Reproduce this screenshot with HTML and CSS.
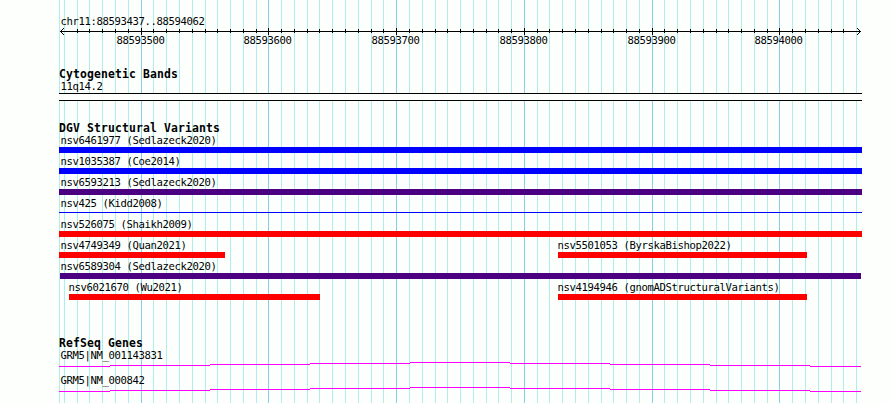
FILE: index.html
```html
<!DOCTYPE html>
<html lang="en">
<head>
    <meta charset="UTF-8">
    <title>chr11:88593437..88594062</title>
    <link rel="stylesheet" href="styles.css">
</head>
<body>

<div class="browser">
    <!-- Vertical guide lines behind all the tracks -->
    <svg class="guides" width="890" height="403" shape-rendering="crispEdges">
        <path class="minor" id="minorGuides" />
        <path class="major" id="majorGuides" />
    </svg>

    <div class="tracks">
        <div class="ruler">
            <div class="label">chr11:88593437..88594062</div>
            <svg class="scale" width="803" height="20" viewBox="59 28 803 20">
                <g shape-rendering="crispEdges">
                    <path class="axis" d="M60 31.5H861" />
                    <path class="axis" id="ticks" />
                    <path class="head" d="M60 31h1v1h-1zM61 30h1v1h-1zM61 32h1v1h-1zM62 29h1v1h-1zM62 33h1v1h-1zM63 28h1v1h-1zM63 34h1v1h-1z" />
                    <path class="head" d="M860 31h1v1h-1zM859 30h1v1h-1zM859 32h1v1h-1zM858 29h1v1h-1zM858 33h1v1h-1zM857 28h1v1h-1zM857 34h1v1h-1z" />
                </g>
                <text x="116.5" y="44">88593500</text>
                <text x="243.5" y="44">88593600</text>
                <text x="371.5" y="44">88593700</text>
                <text x="499.5" y="44">88593800</text>
                <text x="627.5" y="44">88593900</text>
                <text x="754.5" y="44">88594000</text>
            </svg>
        </div>

        <div class="track">
            <h2>Cytogenetic Bands</h2>
            <div class="label">11q14.2</div>
            <div class="band"></div>
        </div>

        <div class="track variants">
            <h2>DGV Structural Variants</h2>
            <div class="row">
                <div class="feature" style="width: 803px"><div class="label">nsv6461977 (Sedlazeck2020)</div><div class="bar gain"></div></div>
            </div>
            <div class="row">
                <div class="feature" style="width: 803px"><div class="label">nsv1035387 (Coe2014)</div><div class="bar gain"></div></div>
            </div>
            <div class="row">
                <div class="feature" style="width: 803px"><div class="label">nsv6593213 (Sedlazeck2020)</div><div class="bar complex"></div></div>
            </div>
            <div class="row">
                <div class="feature" style="width: 803px"><div class="label">nsv425 (Kidd2008)</div><div class="bar gain thin"></div></div>
            </div>
            <div class="row">
                <div class="feature" style="width: 803px"><div class="label">nsv526075 (Shaikh2009)</div><div class="bar loss"></div></div>
            </div>
            <div class="row">
                <div class="feature" style="width: 166px"><div class="label">nsv4749349 (Quan2021)</div><div class="bar loss"></div></div>
                <div class="feature inner" style="width: 249px; margin-left: 333px"><div class="label">nsv5501053 (ByrskaBishop2022)</div><div class="bar loss"></div></div>
            </div>
            <div class="row">
                <div class="feature" style="width: 801px; margin-left: 1px"><div class="label edge">nsv6589304 (Sedlazeck2020)</div><div class="bar complex"></div></div>
            </div>
            <div class="row">
                <div class="feature inner" style="width: 251px; margin-left: 10px"><div class="label">nsv6021670 (Wu2021)</div><div class="bar loss"></div></div>
                <div class="feature inner" style="width: 249px; margin-left: 238px"><div class="label">nsv4194946 (gnomADStructuralVariants)</div><div class="bar loss"></div></div>
            </div>
        </div>

        <div class="track genes">
            <h2>RefSeq Genes</h2>
            <div class="gene">
                <div class="label">GRM5|NM_001143831</div>
                <svg class="intron" width="803" height="5" viewBox="59 0 803 5" shape-rendering="crispEdges">
                    <path d="M59 4.5H110M110 3.5H210M210 2.5H310M310 1.5H410M410 .5H510M510 1.5H610M610 2.5H710M710 3.5H810M810 4.5H861" />
                </svg>
            </div>
            <div class="gene">
                <div class="label">GRM5|NM_000842</div>
                <svg class="intron" width="803" height="5" viewBox="59 0 803 5" shape-rendering="crispEdges">
                    <path d="M59 4.5H110M110 3.5H210M210 2.5H310M310 1.5H410M410 .5H510M510 1.5H610M610 2.5H710M710 3.5H810M810 4.5H861" />
                </svg>
            </div>
        </div>
    </div>
</div>

<script>
    const major = [141, 268, 396, 524, 652, 779];
    const minor = [64, 77, 89, 102, 115, 128, 153, 166, 179, 192, 205, 217, 230, 243, 256,
        281, 294, 307, 319, 332, 345, 358, 371, 383, 409, 422, 435, 447, 460, 473, 486, 498, 511,
        537, 549, 562, 575, 588, 601, 613, 626, 639, 664, 677, 690, 703, 716, 728, 741, 754, 767,
        792, 805, 818, 831, 843, 856];

    // One vertical stroke per position
    function lines(positions, top, bottom) {
        return positions.map(x => `M${x + 0.5} ${top}V${bottom}`).join('');
    }

    document.getElementById('minorGuides').setAttribute('d', lines([59, ...minor], 0, 403));
    document.getElementById('majorGuides').setAttribute('d', lines(major, 0, 403));

    // The outermost positions sit under the arrow heads and get no tick
    document.getElementById('ticks').setAttribute('d', lines(minor.slice(1, -1), 29, 33) + lines(major, 28, 35));
</script>

</body>
</html>
```
FILE: styles.css
```css
body {
    margin: 0;
    background-color: #fdfffc;
    color: #000;
    font-family: "DejaVu Sans Mono", monospace;
    font-size: 10.6px;
}

svg {
    display: block;
}

.browser {
    position: relative;
    width: 890px;
    height: 403px;
    overflow: hidden;
}

.guides {
    position: absolute;
    top: 0;
    left: 0;
}

.guides .minor {
    stroke: #afeeee;
}

.guides .major {
    stroke: #87ceeb;
}

.tracks {
    position: relative; /* keeps the tracks above the guides */
    width: 803px;
    padding: 15px 0 0 59px;
}

.label,
.scale text {
    letter-spacing: -0.38px;
    white-space: nowrap;
}

.label {
    height: 13px;
    line-height: 13px;
    padding-left: 1.5px;
}

.axis {
    stroke: #000;
}

.track {
    margin-top: 19px;
}

h2 {
    margin: 0;
    height: 13px;
    line-height: 15px;
    font-size: 11.4px;
    letter-spacing: 0.14px;
}

.band {
    height: 6px;
    border-top: 1px solid #000;
    border-bottom: 1px solid #000;
    background-color: #fdfffc;
}

.variants {
    margin-top: 20px;
}

.row {
    display: flex;
    height: 21px;
}

.feature .edge {
    padding-left: 0.5px;
}

.inner .label {
    padding-left: 0;
    text-indent: -0.5px;
}

.bar {
    height: 6px;
}

.gain {
    background-color: #0000ff;
}

.loss {
    background-color: #ff0000;
}

.complex {
    background-color: #4b0082;
}

.thin {
    height: 1px;
    margin-top: 2px;
}

.genes {
    margin-top: 34px;
}

.gene {
    height: 25px;
}

.intron path {
    stroke: #ff00ff;
}
```
